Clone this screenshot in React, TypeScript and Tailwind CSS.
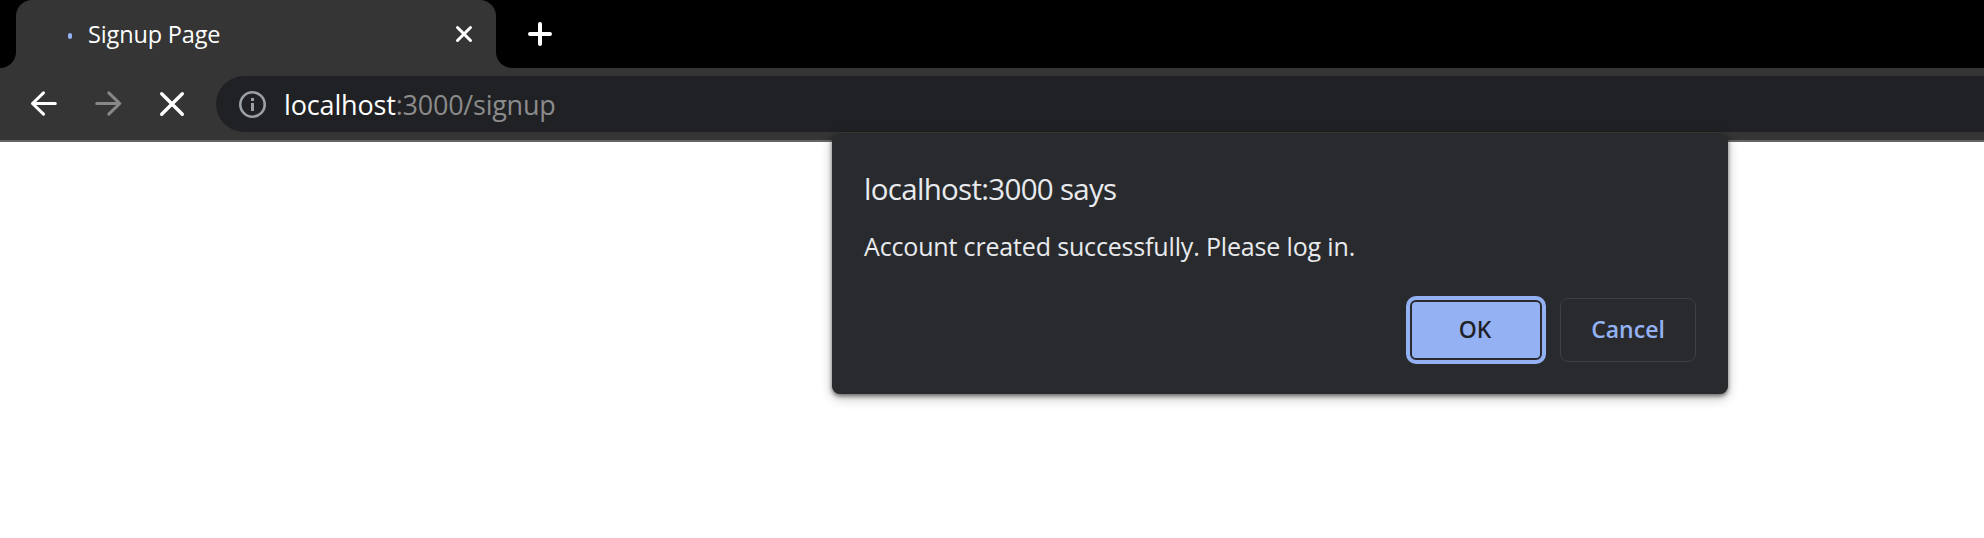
function BackIcon({ className }: { className?: string }) {
  return (
    <svg className={className} width="32" height="32" viewBox="0 0 32 32" fill="none" stroke="currentColor" strokeWidth="3" strokeLinecap="round" strokeLinejoin="round">
      <path d="M27.3 15.5H4.5M15.5 4.8 4.5 15.5 15.5 26.2" />
    </svg>
  );
}

function ForwardIcon({ className }: { className?: string }) {
  return (
    <svg className={className} width="32" height="32" viewBox="0 0 32 32" fill="none" stroke="currentColor" strokeWidth="3" strokeLinecap="round" strokeLinejoin="round">
      <path d="M4.7 15.5h23M16.8 4.8l11 10.7-11 10.7" />
    </svg>
  );
}

function TabStrip() {
  return (
    <div className="flex h-[68px] bg-[#353535]">
      <div className="w-4 rounded-br-[16px] bg-black" />
      <div className="w-[480px] bg-black">
        <div className="flex h-full items-center rounded-t-[16px] bg-[#353535] pr-[23px] pl-[52px]">
          <span className="mt-[4px] h-[6px] w-1 rounded-full bg-[#94b2f3]" />
          <span className="ml-4 flex-1 pb-px text-[23.5px] leading-8 tracking-[-0.15px] text-white">Signup Page</span>
          <svg width="18" height="18" viewBox="0 0 18 18" fill="none" stroke="white" strokeWidth="3" strokeLinecap="round">
            <path d="M2.5 2.5l13 13M15.5 2.5l-13 13" />
          </svg>
        </div>
      </div>
      <div className="flex flex-1 items-center rounded-bl-[16px] bg-black pl-8">
        <svg width="24" height="24" viewBox="0 0 24 24" fill="none" stroke="white" strokeWidth="4" strokeLinecap="round">
          <path d="M12 2v20M2 12h20" />
        </svg>
      </div>
    </div>
  );
}

function Toolbar() {
  return (
    <div className="flex h-[74px] items-start border-b-2 border-[#656565] bg-[#353535] pt-2 pl-7">
      <div className="flex h-14 w-[188px] items-center gap-8">
        <BackIcon className="text-white" />
        <ForwardIcon className="text-[#888888]" />
        <svg width="32" height="32" viewBox="0 0 32 32" fill="none" stroke="white" strokeWidth="3.4" strokeLinecap="round">
          <path d="M5.7 5.7l20.6 20.6M26.3 5.7L5.7 26.3" />
        </svg>
      </div>
      <div className="flex h-14 flex-1 items-center rounded-l-full bg-[#202124] pl-[22px]">
        <svg width="28" height="28" viewBox="0 0 28 28" fill="none">
          <circle cx="14.5" cy="14.5" r="12.2" stroke="#9aa0a6" strokeWidth="2.6" />
          <path d="M13 8h3v3h-3zM13 13h3v8h-3z" fill="#9aa0a6" />
        </svg>
        <div className="ml-[18px] pt-px text-[27px] leading-10 text-[#8b8b8b]">
          <span className="tracking-[-0.15px] text-white">localhost</span>
          <span className="tracking-[-0.25px]">:3000/signup</span>
        </div>
      </div>
    </div>
  );
}

function AlertDialog() {
  return (
    <div className="absolute top-[133px] left-[832px] h-[261px] w-[896px] rounded-[8px] bg-[#292a2d] px-8 pt-9 text-[#e8eaed] shadow-[0_-1px_0_#35352f,0_2px_4px_rgba(0,0,0,0.5),0_4px_12px_rgba(0,0,0,0.25)]">
      <h1 className="text-[29.5px] leading-10 tracking-[-0.7px]">localhost:3000 says</h1>
      <p className="mt-[19px] text-[25px] leading-9 tracking-[-0.16px]">Account created successfully. Please log in.</p>
      <div className="mt-8 flex items-center justify-end gap-[14px]">
        <button className="h-[68px] w-[140px] rounded-[10px] bg-[#94b2f3] p-1">
          <span className="flex h-full items-center justify-center rounded-[6px] border-2 border-[#292a2d] pr-[2px] pb-px font-['Noto_Sans',sans-serif] text-[23px] font-medium text-[#202124]">OK</span>
        </button>
        <button className="h-16 w-[136px] rounded-[8px] border border-[#3c4043] pb-px text-[23px] font-semibold text-[#94b2f3]">Cancel</button>
      </div>
    </div>
  );
}

export default function App() {
  return (
    <div className="relative h-[538px] w-full overflow-hidden bg-white font-['Open_Sans','Noto_Sans',sans-serif]">
      <TabStrip />
      <Toolbar />
      <AlertDialog />
    </div>
  );
}
